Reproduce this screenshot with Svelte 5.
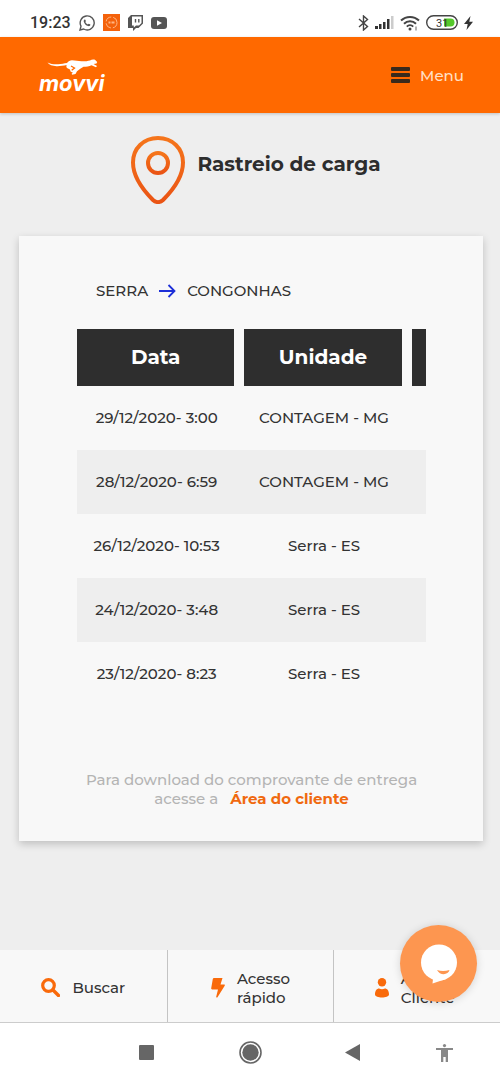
<script lang="ts">
	const rows = [
		{ data: '29/12/2020- 3:00', unidade: 'CONTAGEM - MG' },
		{ data: '28/12/2020- 6:59', unidade: 'CONTAGEM - MG' },
		{ data: '26/12/2020- 10:53', unidade: 'Serra - ES' },
		{ data: '24/12/2020- 3:48', unidade: 'Serra - ES' },
		{ data: '23/12/2020- 8:23', unidade: 'Serra - ES' }
	];
</script>

<div class="screen">
	<div class="status">
		<div class="status-group">
			<span class="clock">19:23</span>
			<svg width="16" height="16" viewBox="0 0 16 16" fill="none" stroke="#555" stroke-width="1.4">
				<path d="M1 15l1-3.8A7 7 0 1 1 4.700 14z" />
				<path d="M5.400 4.400l1 .3.5 1.500-.6.8c.6 1.200 1.400 2 2.600 2.500l.8-.8 1.700.8c0 1.400-1.200 1.900-2.300 1.600C7 10.500 5.300 8.700 4.700 6.500c-.1-.9.100-1.600.7-2.100z" fill="#555" stroke="none" />
			</svg>
			<svg width="17" height="17" viewBox="0 0 17 17">
				<rect width="17" height="17" fill="#f4620b" />
				<circle cx="8.500" cy="8.500" r="5.500" fill="none" stroke="#ffb582" stroke-width="1" stroke-dasharray="7 2" />
				<path d="M5.500 7.500h2v2h-2zM8.500 7.500h3v2h-3z" fill="#ffb582" />
			</svg>
			<svg width="15" height="16" viewBox="0 0 15 16">
				<path d="M3 0h12v8.500L10.500 13H8l-3 3v-3H0V3z" fill="#555" />
				<path d="M4 1.500h9.500V8L11 10.500H8L5.800 12.500v-2H4z" fill="#fff" />
				<path d="M7.500 4v3.500M10.800 4v3.500" stroke="#555" stroke-width="1.400" />
			</svg>
			<svg width="16" height="12" viewBox="0 0 16 12">
				<rect width="16" height="12" rx="3" fill="#555" />
				<path d="M6 3.200v5.600L11 6z" fill="#fff" />
			</svg>
		</div>
		<div class="status-group right">
			<svg width="11" height="16" viewBox="0 0 11 16" fill="none" stroke="#444" stroke-width="1.400">
				<path d="M1 4l8.500 7.500L5.500 15V1l4 3.500L1 12" />
			</svg>
			<svg width="19" height="13" viewBox="0 0 19 13" fill="#333">
				<rect y="10" width="3" height="3" />
				<rect x="4" y="8" width="2.500" height="5" />
				<rect x="8" y="6" width="2.500" height="7" />
				<rect x="12" y="3" width="2.500" height="10" />
				<rect x="16" width="2.500" height="13" fill="#ccc" />
			</svg>
			<svg width="20" height="16" viewBox="0 0 20 16" fill="none" stroke="#444" stroke-width="2">
				<path d="M1 5.500a13 13 0 0 1 18 0M4 8.700a8.600 8.600 0 0 1 12 0M6.800 11.600a4.600 4.600 0 0 1 6.400 0" />
				<circle cx="10" cy="14" r="1.500" fill="#444" stroke="none" />
				<path d="M16 11.500v4" stroke="#999" stroke-width="1.500" />
			</svg>
			<svg width="32" height="15" viewBox="0 0 32 15">
				<rect x="0.700" y="0.700" width="30.600" height="13.600" rx="6.800" fill="#fff" stroke="#444" stroke-width="1.400" />
				<path d="M18 3.500h6.500a4 4 0 0 1 0 8H18z" fill="#55c82b" />
				<text x="10" y="11.500" class="battery">31</text>
			</svg>
			<svg width="9" height="14" viewBox="0 0 9 14" fill="#333">
				<path d="M6.500 0L0 8h3.700L2.500 14 9 5.700H5.300z" />
			</svg>
		</div>
	</div>

	<header>
		<a class="logo" href="#inicio" aria-label="movvi">
			<svg width="76" height="46" viewBox="0 -5 76 46" fill="#fff">
				<path d="M9.500 5.500c3 1.700 7 1.800 10.500 1.700 4-.2 6-.8 9-1.200 1.500-1.700 3-2.700 5-2.700 3.500 0 6 1 9.500 1 3.500.100 6-.3 8.500-.9 1.500-1 3.500-1.200 5-.6l2.200 2.300-.7 1.300-3 .6 3.500 2-1 1.200-4.500-2c-2.500 1-5 1.500-8 1.600-2 1.200-4.500 2.700-6.500 4.400L37.500 17l-3.500.8-.3-1.200 1.300-.8-2.500-1.300-.5-2-3-1.500c-.8-1.200-.8-2-.3-3-3.500.7-6.500 1.300-10.200 1.200-4-.2-7.500-1.300-9-3.700z" />
				<path d="M33 9l3.500 2-2.800 2.200" fill="none" stroke="#ff6900" stroke-width="1.300" />
				<text x="1" y="34" class="wordmark">movvi</text>
			</svg>
		</a>
		<button class="menu" type="button">
			<svg width="19" height="16" viewBox="0 0 19 16" fill="#3a2a1c">
				<rect width="19" height="4" rx="1" />
				<rect y="6" width="19" height="4" rx="1" />
				<rect y="12" width="19" height="4" rx="1" />
			</svg>
			Menu
		</button>
	</header>

	<main>
		<div class="title">
			<svg width="54" height="68" viewBox="0 0 54 68" fill="none" stroke="url(#pin)" stroke-width="4">
				<defs>
					<linearGradient id="pin" x1="0" y1="0" x2="0" y2="1">
						<stop offset="0" stop-color="#f5751b" />
						<stop offset="1" stop-color="#ea5414" />
					</linearGradient>
				</defs>
				<path d="M27 2C12.500 2 2 12.500 2 26.500 2 41 13 55 22 64c3 2.800 7 2.800 10 0 9-9 20-23 20-37.500C52 12.500 41.500 2 27 2z" />
				<circle cx="27" cy="27" r="10" />
			</svg>
			<h1>Rastreio de carga</h1>
		</div>

		<section class="card">
			<div class="route">
				<span>SERRA</span>
				<svg width="17" height="14" viewBox="0 0 17 14" fill="none" stroke="#1d2fd8" stroke-width="1.800">
					<path d="M0 7h15.500M9.500 1l6 6-6 6" />
				</svg>
				<span>CONGONHAS</span>
			</div>

			<div class="scroller">
				<table>
					<thead>
						<tr>
							<th>Data</th>
							<th>Unidade</th>
							<th></th>
						</tr>
					</thead>
					<tbody>
						{#each rows as row}
							<tr>
								<td>{row.data}</td>
								<td>{row.unidade}</td>
								<td></td>
							</tr>
						{/each}
					</tbody>
				</table>
			</div>

			<p class="note">
				Para download do comprovante de entrega<br />
				acesse a <a href="#cliente">Área do cliente</a>
			</p>
		</section>
	</main>

	<nav class="shortcuts">
		<a href="#buscar">
			<svg width="19" height="19" viewBox="0 0 19 19" fill="none" stroke="#f96a0b">
				<circle cx="7.500" cy="7.500" r="5.800" stroke-width="3.200" />
				<path d="M12 12l5.500 5.500" stroke-width="3.400" stroke-linecap="round" />
			</svg>
			<span>Buscar</span>
		</a>
		<a href="#acesso">
			<svg width="14" height="20" viewBox="0 0 14 20" fill="#f96a0b">
				<path d="M3 0h8.500L9.500 6.500H13c.8 0 1 .6.700 1.200L6.500 19.200c-.5.700-1.500.3-1.300-.5L7 11.500H1.200c-.7 0-1.100-.5-1-1.200L1.800 1C1.900.4 2.400 0 3 0z" />
			</svg>
			<span>Acesso<br />rápido</span>
		</a>
		<a href="#cliente">
			<svg width="14" height="20" viewBox="0 0 14 20" fill="#f96a0b">
				<circle cx="7" cy="4.300" r="4.200" />
				<path d="M0 16.500C0 12.500 2 10.500 4 10.500c2 1 4 1 6 0 2 0 4 2 4 6 0 4-14 4-14 0z" />
			</svg>
			<span>Área do<br />Cliente</span>
		</a>
		<button class="chat" type="button" aria-label="Chat">
			<svg width="38" height="40" viewBox="0 0 38 40">
				<circle cx="19" cy="18.500" r="18" fill="#fff" />
				<path d="M9 32l4 3-.5 4.500L26 35z" fill="#fff" />
				<path d="M17 26c4 1.300 8 1.300 12.500 0-1 5-9.500 6-12.500 0z" fill="#fd9650" />
			</svg>
		</button>
	</nav>

	<div class="system">
		<svg width="15" height="15" viewBox="0 0 15 15"><rect width="15" height="15" rx="1" fill="#666" /></svg>
		<svg width="23" height="23" viewBox="0 0 23 23">
			<circle cx="11.500" cy="11.500" r="10.500" fill="none" stroke="#666" stroke-width="1.600" />
			<circle cx="11.500" cy="11.500" r="8.200" fill="#666" />
		</svg>
		<svg width="15" height="17" viewBox="0 0 15 17"><path d="M15 0v17L0 8.500z" fill="#666" /></svg>
		<svg width="17" height="18" viewBox="0 0 17 18" fill="#888">
			<circle cx="8.500" cy="1.600" r="1.600" />
			<path d="M0 4h17v2h-5v12h-2.300v-5H7.300v5H5V6H0z" />
		</svg>
	</div>
</div>

<style>
	:global(body) {
		margin: 0;
		background: #eee;
	}

	.screen {
		display: flex;
		flex-direction: column;
		min-height: 100vh;
		font-family: Montserrat, Inter, sans-serif;
		font-size: 15px;
		font-weight: 500;
		line-height: 19px;
		color: #333;
	}

	svg {
		display: block;
		flex: none;
	}

	a {
		color: inherit;
		text-decoration: none;
	}

	button {
		border: 0;
		padding: 0;
		font: inherit;
		cursor: pointer;
	}

	/* Android status bar */
	.status {
		display: flex;
		justify-content: space-between;
		align-items: center;
		height: 29px;
		padding: 8px 27px 0 30px;
		background: #fff;
	}

	.status-group {
		display: flex;
		align-items: center;
		gap: 8px;
	}

	.status-group.right {
		gap: 6px;
	}

	.clock {
		font-family: Roboto, sans-serif;
		font-size: 16px;
	}

	.battery {
		font-family: Roboto, sans-serif;
		font-size: 11px;
		font-weight: 400;
		fill: #333;
	}

	header {
		display: flex;
		justify-content: space-between;
		align-items: center;
		height: 76px;
		padding: 0 36px 0 38px;
		background: #ff6900;
		box-shadow: 0 1px 3px rgba(0, 0, 0, 0.2);
	}

	.wordmark {
		font-family: Inter, sans-serif;
		font-size: 22px;
		font-weight: 700;
		font-style: italic;
	}

	.menu {
		display: flex;
		align-items: center;
		gap: 10px;
		background: none;
		color: #ffe0c8;
	}

	main {
		flex: 1;
		padding: 23px 17px 40px 19px;
	}

	.title {
		display: flex;
		justify-content: center;
		gap: 12px;
		padding-left: 10px;
		margin-bottom: 32px;
	}

	h1 {
		margin: 16px 0 0;
		font-size: 20px;
		line-height: 24px;
		font-weight: 700;
		color: #2d2d2d;
	}

	.card {
		padding: 45px 57px 33px 58px;
		background: #f8f8f8;
		box-shadow: 0 3px 8px rgba(0, 0, 0, 0.2);
	}

	.route {
		display: flex;
		align-items: center;
		gap: 11px;
		padding-left: 19px;
		margin-bottom: 29px;
	}

	.scroller {
		overflow-x: auto;
		scrollbar-width: none;
	}

	table {
		width: 502px;
		table-layout: fixed;
		border-collapse: separate;
		border-spacing: 0;
		text-align: center;
	}

	th {
		height: 57px;
		padding: 0;
		border-right: 10px solid #f8f8f8;
		background: #2e2e2e;
		color: #fff;
		font-size: 20px;
		font-weight: 700;
	}

	td {
		height: 62px;
		padding: 0 8px 2px 0;
		white-space: nowrap;
	}

	tbody tr:nth-child(even) {
		background: #eee;
	}

	.note {
		margin: 64px 0 0;
		text-align: center;
		color: #b4b4b4;
	}

	.note a {
		margin-left: 8px;
		font-weight: 700;
		color: #f0690f;
	}

	.shortcuts {
		position: relative;
		display: grid;
		grid-template-columns: repeat(3, 1fr);
		height: 72px;
		border-bottom: 1px solid #ccc;
		background: #f8f8f8;
	}

	.shortcuts a {
		display: flex;
		justify-content: center;
		align-items: center;
		gap: 12px;
		padding-top: 3px;
	}

	.shortcuts a + a {
		border-left: 1px solid #c4c4c4;
	}

	/* floats over the shortcuts */
	.chat {
		position: absolute;
		right: 23px;
		bottom: 20px;
		display: flex;
		justify-content: center;
		align-items: center;
		width: 77px;
		height: 77px;
		border-radius: 50%;
		background: #fd9650;
		box-shadow: 0 1px 8px rgba(0, 0, 0, 0.15);
	}

	.system {
		display: grid;
		grid-template-columns: 104fr 104fr 100fr 84fr;
		place-items: center;
		height: 59px;
		padding: 0 14px 0 94px;
		background: #fff;
	}
</style>
